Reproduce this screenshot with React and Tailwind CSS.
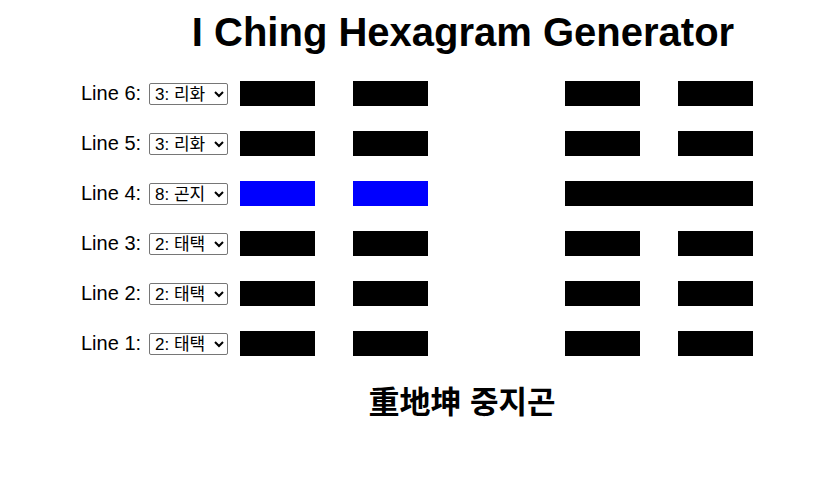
import { useState } from 'react'

const OPTIONS = [
  { v: 1, label: '1: 건천' },
  { v: 2, label: '2: 태택' },
  { v: 3, label: '3: 리화' },
  { v: 4, label: '4: 진뢰' },
  { v: 5, label: '5: 손풍' },
  { v: 6, label: '6: 감수' },
  { v: 7, label: '7: 간산' },
  { v: 8, label: '8: 곤지' },
]

// line 6 first
const INITIAL = [
  { n: 6, value: 3, left: 'broken', right: 'broken' },
  { n: 5, value: 3, left: 'broken', right: 'broken' },
  { n: 4, value: 8, left: 'changing', right: 'solid' },
  { n: 3, value: 2, left: 'broken', right: 'broken' },
  { n: 2, value: 2, left: 'broken', right: 'broken' },
  { n: 1, value: 2, left: 'broken', right: 'broken' },
]

function HexLine({ kind }) {
  if (kind === 'solid') {
    return <div className="w-[188px] h-[25px] bg-black"></div>
  }
  const color = kind === 'changing' ? 'bg-[#0000ff]' : 'bg-black'
  return (
    <div className="flex w-[188px] justify-between">
      <div className={`w-[75px] h-[25px] ${color}`}></div>
      <div className={`w-[75px] h-[25px] ${color}`}></div>
    </div>
  )
}

export default function App() {
  const [lines, setLines] = useState(INITIAL)

  const update = (n, value) => {
    setLines(lines.map(l => (l.n === n ? { ...l, value: Number(value) } : l)))
  }

  return (
    <div className="w-[830px] h-[484px] bg-white text-black" style={{ fontFamily: '"Liberation Sans", "Noto Sans CJK KR", Arial, sans-serif' }}>
      <h1 className="pt-[9px] pl-[96px] text-center text-[40px] font-bold leading-[46px]">I Ching Hexagram Generator</h1>

      <div className="mt-[26px] pl-[81px] flex flex-col gap-[25px]">
        {lines.map(l => (
          <div key={l.n} className="flex items-center h-[25px]">
            <span className="text-[20px] leading-[22px] w-[68px] -mt-[2px]">Line {l.n}:</span>
            <select
              value={l.value}
              onChange={e => update(l.n, e.target.value)}
              className="w-[79px] h-[22px] text-[17px] leading-[20px] border border-[#767676] rounded-[2px] bg-white pl-[1px]"
              style={{ fontFamily: '"Liberation Sans", "Noto Sans CJK KR", sans-serif', appearance: 'auto' }}
            >
              {OPTIONS.map(o => (
                <option key={o.v} value={o.v}>{o.label}</option>
              ))}
            </select>
            <div className="ml-[12px]">
              <HexLine kind={l.left} />
            </div>
            <div className="ml-[137px]">
              <HexLine kind={l.right} />
            </div>
          </div>
        ))}
      </div>

      <h2 className="mt-[28px] pl-[94px] text-center text-[31px] font-bold leading-[38px]" style={{ fontFamily: '"Liberation Sans", "Noto Sans CJK KR", "Noto Sans CJK SC", sans-serif' }}>
        重地坤 중지곤
      </h2>
    </div>
  )
}
